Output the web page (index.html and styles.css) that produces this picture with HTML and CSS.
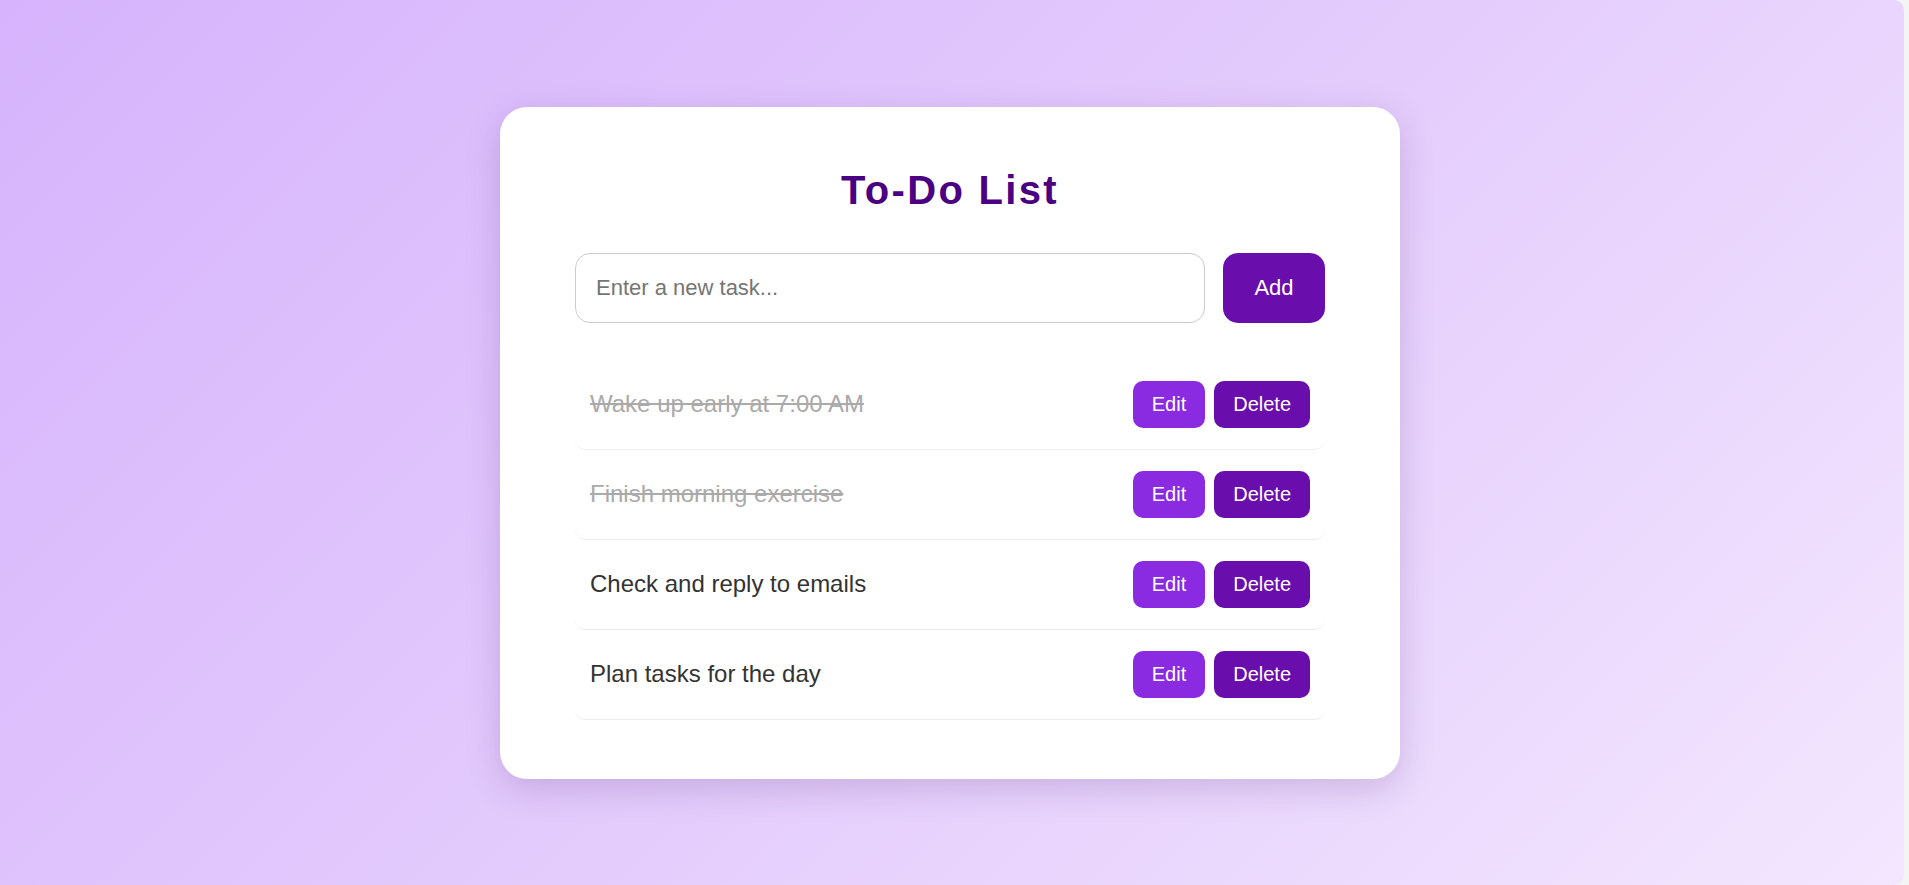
FILE: index.html
```html
<!DOCTYPE html>
<html lang="en">
<head>
<meta charset="UTF-8">
<title>To-Do List</title>
<link rel="stylesheet" href="styles.css">
</head>
<body>
<div class="page">
  <div class="card">
    <h1 class="title">To-Do List</h1>
    <div class="add-row">
      <input class="task-input" type="text" placeholder="Enter a new task...">
      <button class="btn-add">Add</button>
    </div>
    <ul class="task-list">
      <li class="task">
        <span class="task-text done">Wake up early at 7:00 AM</span>
        <div class="actions"><button class="btn-edit">Edit</button><button class="btn-delete">Delete</button></div>
      </li>
      <li class="task">
        <span class="task-text done">Finish morning exercise</span>
        <div class="actions"><button class="btn-edit">Edit</button><button class="btn-delete">Delete</button></div>
      </li>
      <li class="task">
        <span class="task-text">Check and reply to emails</span>
        <div class="actions"><button class="btn-edit">Edit</button><button class="btn-delete">Delete</button></div>
      </li>
      <li class="task">
        <span class="task-text">Plan tasks for the day</span>
        <div class="actions"><button class="btn-edit">Edit</button><button class="btn-delete">Delete</button></div>
      </li>
    </ul>
  </div>
</div>
</body>
</html>
```
FILE: styles.css
```css
html {
  background: #f4f4f5;
}
body {
  margin: 0;
  font-family: "Liberation Sans", Arial, sans-serif;
}
.page {
  width: calc(100% - 5px);
  height: 885px;
  box-sizing: border-box;
  padding-right: 4px;
  background: linear-gradient(135deg, #d6b3fc 0%, #e3cbfc 50%, #f3e6fe 100%);
  border-radius: 0 10px 10px 0;
  display: flex;
  align-items: center;
  justify-content: center;
}
.card {
  width: 900px;
  box-sizing: border-box;
  background: #fff;
  border-radius: 27px;
  padding: 60px 75px 59px;
  box-shadow: 0 10px 35px rgba(60, 20, 100, 0.18);
}
.title {
  margin: 0 0 40px;
  text-align: center;
  font-size: 40px;
  font-weight: bold;
  letter-spacing: 2.3px;
  color: #4b0082;
  line-height: 46px;
}
.add-row {
  display: flex;
  gap: 18px;
  margin-bottom: 37px;
}
.task-input {
  flex: 1;
  height: 70px;
  box-sizing: border-box;
  border: 1px solid #ccc;
  border-radius: 15px;
  padding: 0 20px;
  font-family: "Liberation Sans", Arial, sans-serif;
  font-size: 22px;
  color: #333;
  outline: none;
}
.task-input::placeholder {
  color: #757575;
}
.btn-add {
  width: 102px;
  height: 70px;
  border: none;
  border-radius: 15px;
  background: #6a0dad;
  color: #fff;
  font-family: "Liberation Sans", Arial, sans-serif;
  font-size: 22px;
  padding: 0;
}
.task-list {
  list-style: none;
  margin: 0;
  padding: 0;
}
.task {
  display: flex;
  align-items: center;
  justify-content: space-between;
  height: 90px;
  box-sizing: border-box;
  padding: 0 15px;
  border-bottom: 1px solid #ececec;
  border-radius: 10px;
}
.task-text {
  font-size: 24px;
  color: #333;
}
.task-text.done {
  color: #aaa;
  text-decoration: line-through;
}
.actions {
  display: flex;
  gap: 9px;
}
.actions button {
  height: 47px;
  padding: 0 19px;
  border: none;
  border-radius: 10px;
  color: #fff;
  font-family: "Liberation Sans", Arial, sans-serif;
  font-size: 20px;
}
.btn-edit {
  background: #8a2be2;
}
.btn-delete {
  background: #6a0dad;
}
```
